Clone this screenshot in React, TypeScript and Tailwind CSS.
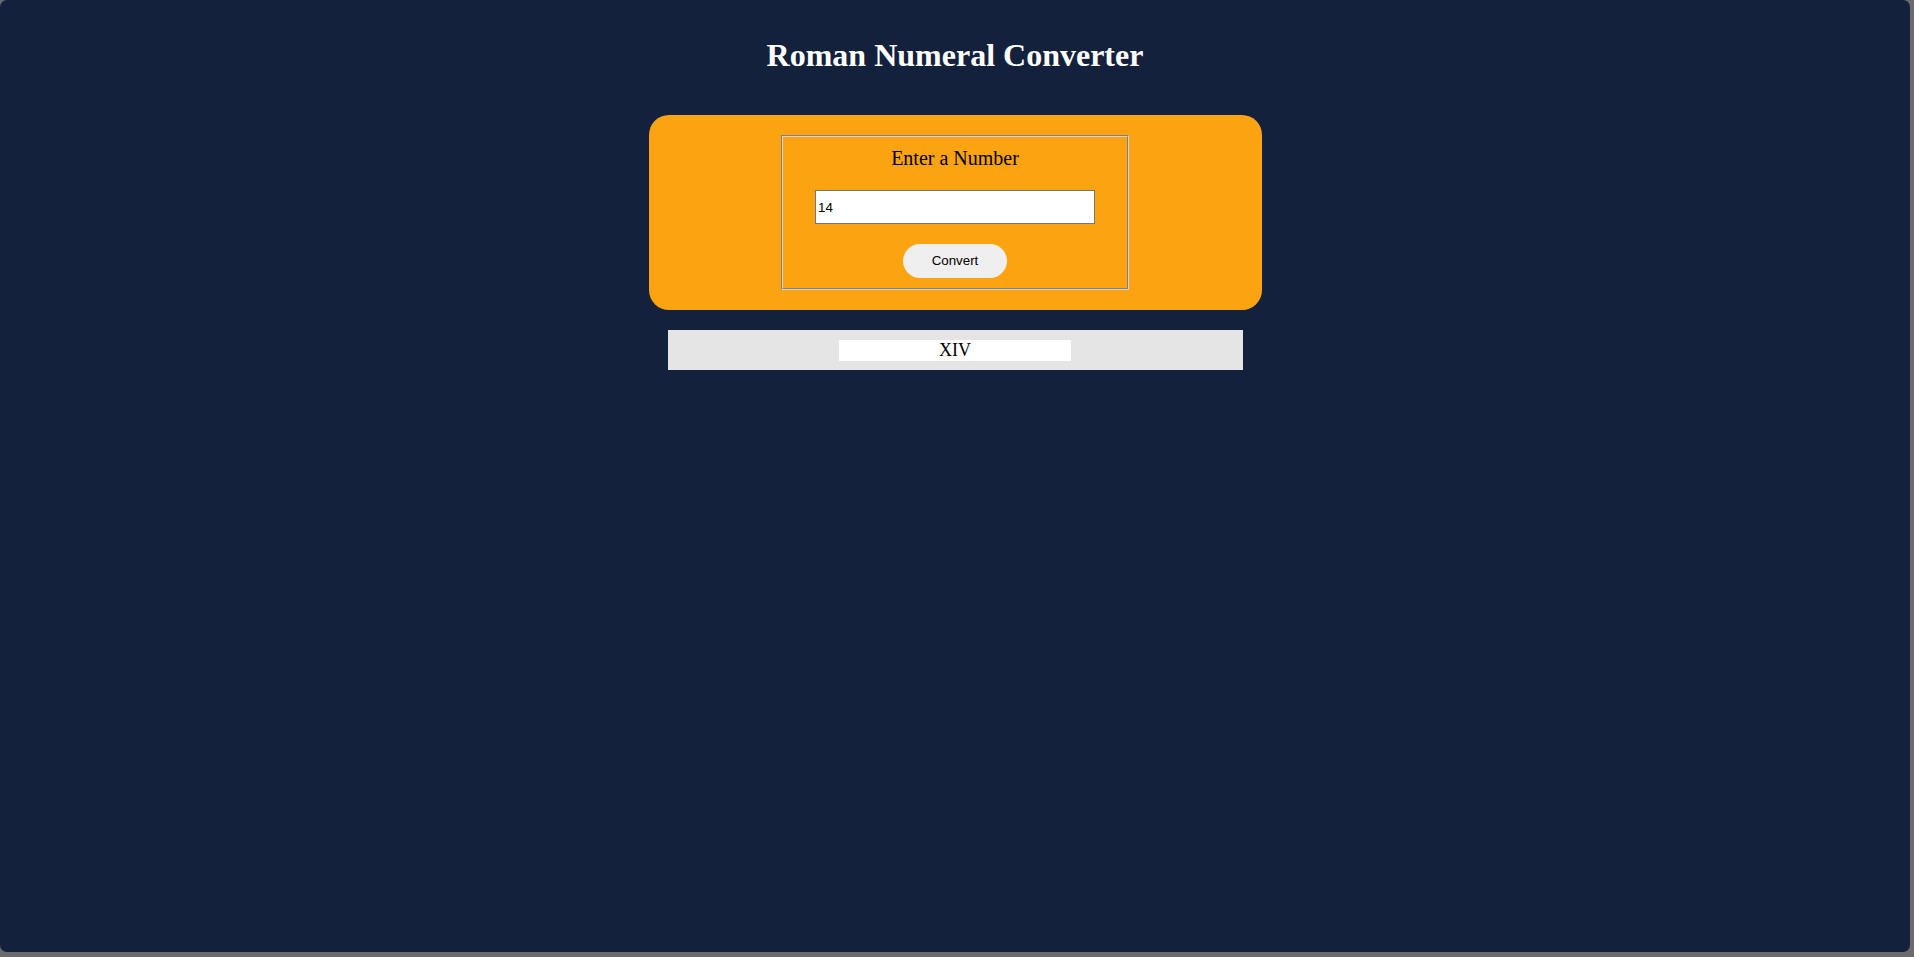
import { useState } from "react"

const toRoman = (num: number) => {
    const map: [number, string][] = [
        [1000, "M"], [900, "CM"], [500, "D"], [400, "CD"],
        [100, "C"], [90, "XC"], [50, "L"], [40, "XL"],
        [10, "X"], [9, "IX"], [5, "V"], [4, "IV"], [1, "I"],
    ]
    let out = ""
    let n = num
    for (const [v, s] of map) {
        while (n >= v) {
            out += s
            n -= v
        }
    }
    return out
}

const App = () => {
    const [value, setValue] = useState("14")
    const [result, setResult] = useState(toRoman(14))

    const convert = () => {
        const n = parseInt(value, 10)
        if (!Number.isNaN(n) && n > 0 && n < 4000) setResult(toRoman(n))
    }

    return (
        <div className="w-[1914px] h-[957px] bg-[#6b6b6b] overflow-hidden">
            <div className="w-[1910px] h-[952px] rounded-[7px] bg-[#14213d] flex flex-col items-center font-['Liberation_Serif',serif]">
                <h1 className="pt-[37px] text-[32px] leading-[37px] font-bold text-white">
                    Roman Numeral Converter
                </h1>

                {/* input card */}
                <div className="mt-[41px] w-[613px] py-[20px] rounded-[20px] bg-[#fca311] flex justify-center">
                    <div className="w-[348px] h-[155px] border-2 border-[#d4d4d4] [border-style:groove] flex flex-col items-center pt-[10px]">
                        <label
                            htmlFor="number"
                            className="text-[20px] leading-[23px] text-black"
                        >
                            Enter a Number
                        </label>
                        <input
                            id="number"
                            type="text"
                            value={value}
                            onChange={e => setValue(e.target.value)}
                            className="mt-[20px] w-[280px] h-[34px] px-[2px] bg-white border border-[#767676] text-[13.33px] text-black font-['Liberation_Sans',Arial,sans-serif] outline-none"
                        />
                        <button
                            onClick={convert}
                            className="mt-[20px] w-[104px] h-[34px] rounded-full bg-[#efefef] text-[13.33px] text-black font-['Liberation_Sans',Arial,sans-serif]"
                        >
                            Convert
                        </button>
                    </div>
                </div>

                {/* output */}
                <div className="mt-[20px] w-[575px] h-[40px] bg-[#e5e5e5] flex items-center justify-center">
                    <div className="w-[232px] h-[21px] bg-white text-center text-[18px] leading-[21px] text-black">
                        {result}
                    </div>
                </div>
            </div>
        </div>
    )
}

export default App
